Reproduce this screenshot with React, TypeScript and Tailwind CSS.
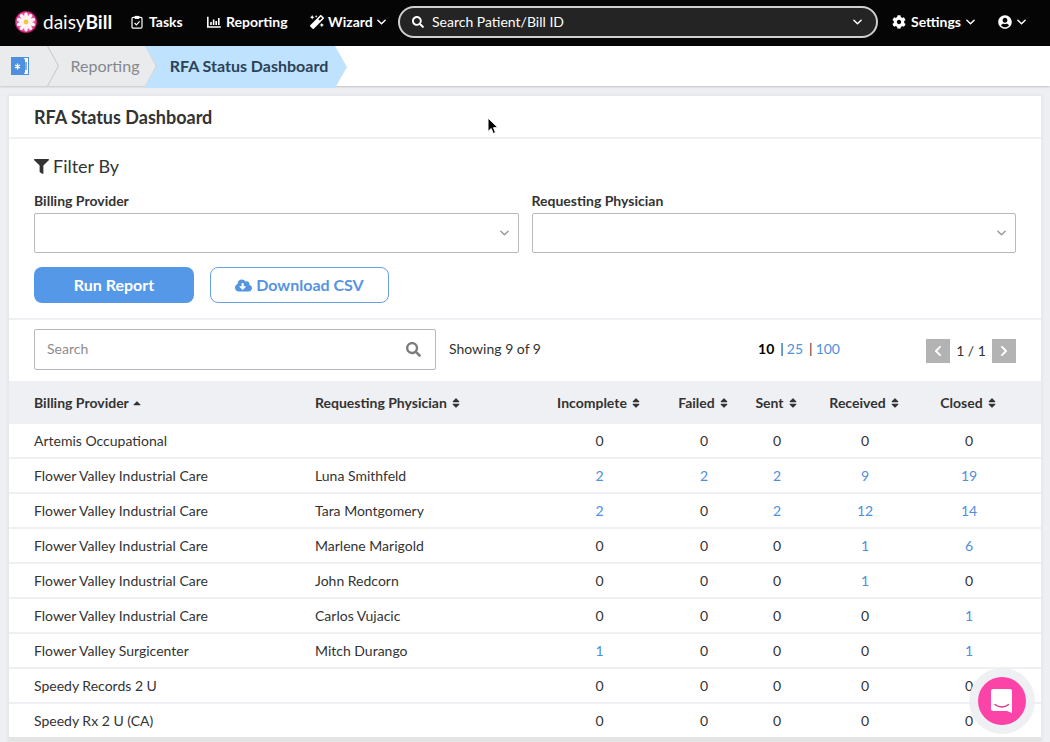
import { useState } from 'react';
import {
  FaCaretUp,
  FaChevronLeft,
  FaChevronRight,
  FaCloudDownloadAlt,
  FaCog,
  FaFilter,
  FaMagic,
  FaSearch,
  FaSort,
  FaUserCircle,
} from 'react-icons/fa';

const columns = ['Incomplete', 'Failed', 'Sent', 'Received', 'Closed'];

const rows = [
  { provider: 'Artemis Occupational', physician: '', counts: [0, 0, 0, 0, 0] },
  { provider: 'Flower Valley Industrial Care', physician: 'Luna Smithfeld', counts: [2, 2, 2, 9, 19] },
  { provider: 'Flower Valley Industrial Care', physician: 'Tara Montgomery', counts: [2, 0, 2, 12, 14] },
  { provider: 'Flower Valley Industrial Care', physician: 'Marlene Marigold', counts: [0, 0, 0, 1, 6] },
  { provider: 'Flower Valley Industrial Care', physician: 'John Redcorn', counts: [0, 0, 0, 1, 0] },
  { provider: 'Flower Valley Industrial Care', physician: 'Carlos Vujacic', counts: [0, 0, 0, 0, 1] },
  { provider: 'Flower Valley Surgicenter', physician: 'Mitch Durango', counts: [1, 0, 0, 0, 1] },
  { provider: 'Speedy Records 2 U', physician: '', counts: [0, 0, 0, 0, 0] },
  { provider: 'Speedy Rx 2 U (CA)', physician: '', counts: [0, 0, 0, 0, 0] },
];

function Chevron({ className = '' }: { className?: string }) {
  return (
    <svg viewBox="0 0 10 6" className={`w-[9px] h-[6px] shrink-0 ${className}`} fill="none" stroke="currentColor" strokeWidth="1.6" strokeLinecap="round" strokeLinejoin="round" aria-hidden="true">
      <path d="M1 1l4 4 4-4" />
    </svg>
  );
}

function Daisy() {
  const petals = [0, 36, 72, 108, 144, 180, 216, 252, 288, 324];
  return (
    <svg viewBox="0 0 22 22" className="w-[22px] h-[22px] shrink-0" aria-hidden="true">
      <circle cx="11" cy="11" r="11" fill="#c2186b" />
      <circle cx="11" cy="11" r="10" fill="#e0579a" />
      {petals.map((deg) => (
        <ellipse key={deg} cx="11" cy="5.4" rx="1.9" ry="4" fill="#fff3f6" transform={`rotate(${deg} 11 11)`} />
      ))}
      <circle cx="11" cy="11" r="2.4" fill="#f3c73c" />
    </svg>
  );
}

function TasksIcon() {
  return (
    <svg viewBox="0 0 12 14" className="w-3 h-[14px] shrink-0" fill="none" stroke="currentColor" strokeWidth="1.2" aria-hidden="true">
      <rect x="1" y="2.4" width="10" height="10.8" rx="1.2" />
      <path d="M4 1.4h4v2H4z" fill="currentColor" strokeWidth="1" />
      <path d="M3.6 8l1.8 1.8 3.2-3.4" />
    </svg>
  );
}

function ReportingIcon() {
  return (
    <svg viewBox="0 0 14 12" className="w-[14px] h-3 shrink-0" fill="none" stroke="currentColor" strokeWidth="1.6" aria-hidden="true">
      <path d="M.8 .8v10.2h13" />
      <path d="M4 6v3M6.6 3.6V9M9.2 5v4M11.8 2v7" />
    </svg>
  );
}

function CrumbEdge() {
  return (
    <svg viewBox="0 0 12 40" className="w-3 h-10 shrink-0" fill="none" stroke="#c4c6ca" aria-hidden="true">
      <path d="M.5 0L11.5 20 .5 40" />
    </svg>
  );
}

function NavBar() {
  return (
    <nav className="flex items-center h-[46px] pl-[15px] pr-6 pb-0.5 bg-[#050505] text-white text-sm font-bold">
      <a href="#" className="flex items-center gap-[6px] w-[116px]">
        <Daisy />
        <span className="text-[19px] leading-5 font-normal">
          daisy<span className="font-bold">Bill</span>
        </span>
      </a>
      <a href="#" className="flex items-center gap-[6px] w-[76px]">
        <TasksIcon />
        Tasks
      </a>
      <a href="#" className="flex items-center gap-[5px] w-[103px]">
        <ReportingIcon />
        Reporting
      </a>
      <button className="flex items-center gap-1 w-[88px]">
        <FaMagic className="w-[14px] h-[14px]" />
        Wizard
        <Chevron />
      </button>
      <label className="flex flex-1 items-center gap-2 h-8 px-3 rounded-full border-2 border-[#cfcfcf] bg-[#242424] font-normal">
        <FaSearch className="w-3 h-3 shrink-0" />
        <input
          type="text"
          aria-label="Search Patient/Bill ID"
          placeholder="Search Patient/Bill ID"
          className="flex-1 min-w-0 bg-transparent outline-none placeholder:text-white"
        />
        <Chevron className="mr-[2px]" />
      </label>
      <button className="flex items-center gap-[5px] ml-[14px]">
        <FaCog className="w-[14px] h-[14px]" />
        Settings
        <Chevron />
      </button>
      <button className="flex items-center gap-[5px] ml-[23px]" aria-label="Account">
        <FaUserCircle className="w-[14px] h-[14px]" />
        <Chevron />
      </button>
    </nav>
  );
}

function Breadcrumbs() {
  return (
    <div className="flex h-10 bg-white shadow-[0_1px_2px_rgba(0,0,0,0.18)] text-base">
      <a href="#" aria-label="Home" className="flex items-center bg-[#eaebed] pl-[10px] w-[47px]">
        <svg viewBox="0 0 20 20" className="w-5 h-5" aria-hidden="true">
          <rect x="1" y="1" width="18" height="18" fill="#4f8fe0" />
          <path d="M14 2h4v16h-4l1-2V4z" fill="#fff" />
          <path d="M16 6v8" stroke="#4f8fe0" strokeWidth="1.4" />
          <path d="M7.5 7.6v5.8M5 9l5 3M10 9l-5 3" stroke="#fff" strokeWidth="1.3" />
        </svg>
      </a>
      <div className="flex z-10 bg-[#eaebed] -mr-3">
        <CrumbEdge />
      </div>
      <a href="#" className="flex items-center justify-center w-[98px] pl-[18px] bg-[#eaebed] text-[#85888e]">
        Reporting
      </a>
      <div className="flex z-10 -mr-3 bg-[#eaebed] [clip-path:polygon(0_0,100%_50%,0_100%)]">
        <CrumbEdge />
      </div>
      <span className="flex items-center justify-center h-[42px] w-[202px] pl-[6px] pb-0.5 bg-[#bfe2ff] text-[#2b4257] font-bold [clip-path:polygon(0_0,calc(100%-12px)_0,100%_50%,calc(100%-12px)_100%,0_100%)]">
        RFA Status Dashboard
      </span>
    </div>
  );
}

function FilterSelect({ id, label }: { id: string; label: string }) {
  return (
    <div className="flex-1">
      <label htmlFor={id} className="block mb-[2px] text-sm leading-5 font-bold">
        {label}
      </label>
      <div className="grid items-center">
        <select id={id} className="col-start-1 row-start-1 w-full h-10 px-3 appearance-none rounded-xs border border-[#b9b9b9] bg-white">
          <option value=""></option>
        </select>
        <Chevron className="col-start-1 row-start-1 justify-self-end mr-[10px] text-[#9a9a9a] pointer-events-none" />
      </div>
    </div>
  );
}

export default function App() {
  const [query, setQuery] = useState('');

  return (
    <div className="min-h-screen bg-[#eeeff3] text-[#333] font-[Lato,sans-serif]">
      <NavBar />
      <Breadcrumbs />

      <main className="mx-[9px] mt-[10px] bg-white border-b-[5px] border-[#e4e4e4] shadow-[0_0_2px_2px_rgba(0,0,0,0.03)]">
        <h1 className="h-[43px] pl-[25px] border-b-2 border-[#eff0f4] text-lg leading-[42px] font-bold">RFA Status Dashboard</h1>

        <section className="px-[25px] pt-[15px] pb-[15px] border-b-2 border-[#eff0f4]">
          <h2 className="flex items-center gap-1 mb-[13px] text-lg leading-6">
            <FaFilter className="w-[15px] h-[15px]" />
            Filter By
          </h2>
          <div className="flex gap-[13px]">
            <FilterSelect id="provider" label="Billing Provider" />
            <FilterSelect id="physician" label="Requesting Physician" />
          </div>
          <div className="flex gap-4 mt-[14px] text-base font-bold">
            <button className="w-40 h-9 rounded-lg bg-[#5698e8] text-white">Run Report</button>
            <button className="flex items-center justify-center gap-1 w-[179px] h-9 rounded-lg border border-[#6a9fde] bg-white text-[#5594e0]">
              <FaCloudDownloadAlt className="w-[17px] h-[17px]" />
              Download CSV
            </button>
          </div>
        </section>

        <div className="flex items-center h-[61px] px-[25px] pb-[3px] text-sm">
          <label className="flex items-center w-[402px] h-[41px] px-3 rounded-xs border border-[#b9b9b9]">
            <input
              type="text"
              aria-label="Search"
              placeholder="Search"
              value={query}
              onChange={(e) => setQuery(e.target.value)}
              className="flex-1 min-w-0 outline-none placeholder:text-[#8c8c8c]"
            />
            <FaSearch className="w-[15px] h-[15px] mr-[2px] text-[#7d7d7d]" />
          </label>
          <span className="ml-[13px]">Showing 9 of 9</span>
          <div className="flex gap-[3px] ml-auto">
            <span className="mr-[3px] font-bold text-black">10</span>
            <span>|</span>
            <a href="#" className="mr-[3px] text-[#4f8fdc]">25</a>
            <span>|</span>
            <a href="#" className="text-[#4f8fdc]">100</a>
          </div>
          <div className="flex items-center justify-between w-[90px] ml-[86px] mt-1">
            <button aria-label="Previous page" className="flex items-center justify-center w-6 h-6 bg-[#b3b3b3] text-white">
              <FaChevronLeft className="w-3 h-3" />
            </button>
            <span>1 / 1</span>
            <button aria-label="Next page" className="flex items-center justify-center w-6 h-6 bg-[#b3b3b3] text-white">
              <FaChevronRight className="w-3 h-3" />
            </button>
          </div>
        </div>

        <table className="w-full table-fixed border-separate border-spacing-0 text-sm leading-5">
          <colgroup>
            <col />
            <col className="w-[230px]" />
            <col className="w-[109px]" />
            <col className="w-[100px]" />
            <col className="w-[46px]" />
            <col className="w-[130px]" />
            <col className="w-[111px]" />
          </colgroup>
          <thead>
            <tr className="h-[43px] bg-[#eff0f4] text-left">
              <th className="pl-[25px]">
                <span className="flex items-center gap-[2px]">
                  Billing Provider
                  <FaCaretUp className="w-3 h-3" />
                </span>
              </th>
              <th>
                <span className="flex items-center gap-[3px]">
                  Requesting Physician
                  <FaSort className="w-3 h-3" />
                </span>
              </th>
              {columns.map((column) => (
                <th key={column} className="last:pr-[33px]">
                  <span className="flex items-center justify-center gap-[3px]">
                    {column}
                    <FaSort className="w-3 h-3 shrink-0" />
                  </span>
                </th>
              ))}
            </tr>
          </thead>
          <tbody className="[&>tr:not(:last-child)>td]:border-b-2">
            {rows.map((row, i) => (
              <tr key={i} className="h-[35px] last:h-[33px]">
                <td className="pl-[25px] border-[#eff0f4]">{row.provider}</td>
                <td className="border-[#eff0f4]">{row.physician}</td>
                {row.counts.map((count, j) => (
                  <td key={j} className="text-center border-[#eff0f4] last:pr-[33px]">
                    {count > 0 ? <a href="#" className="text-[#4f8fdc]">{count}</a> : count}
                  </td>
                ))}
              </tr>
            ))}
          </tbody>
        </table>
      </main>

      {/* chat launcher */}
      <button aria-label="Open chat" className="fixed right-6 bottom-[17px] flex items-center justify-center w-12 h-12 rounded-full bg-[#fb43a8] shadow-[0_0_0_9px_rgba(236,237,242,0.85)]">
        <svg viewBox="0 0 24 26" className="w-6 h-[26px]" aria-hidden="true">
          <path d="M3 1h17a2 2 0 012 2v22l-5-2H3a2 2 0 01-2-2V3a2 2 0 012-2z" fill="#fff" />
          <path d="M5 16.500c4 3.300 9.500 3.300 13.500 0" fill="none" stroke="#d8388f" strokeWidth="1.400" strokeLinecap="round" />
        </svg>
      </button>

      {/* mouse pointer */}
      <svg viewBox="0 0 12 18" className="absolute left-[487px] top-[117px] w-3 h-[18px] pointer-events-none" aria-hidden="true">
        <path d="M1 1v13.500l3.200-3 2 5 2.300-1-2-4.800H11z" fill="#000" stroke="#fff" strokeWidth="1" />
      </svg>
    </div>
  );
}
